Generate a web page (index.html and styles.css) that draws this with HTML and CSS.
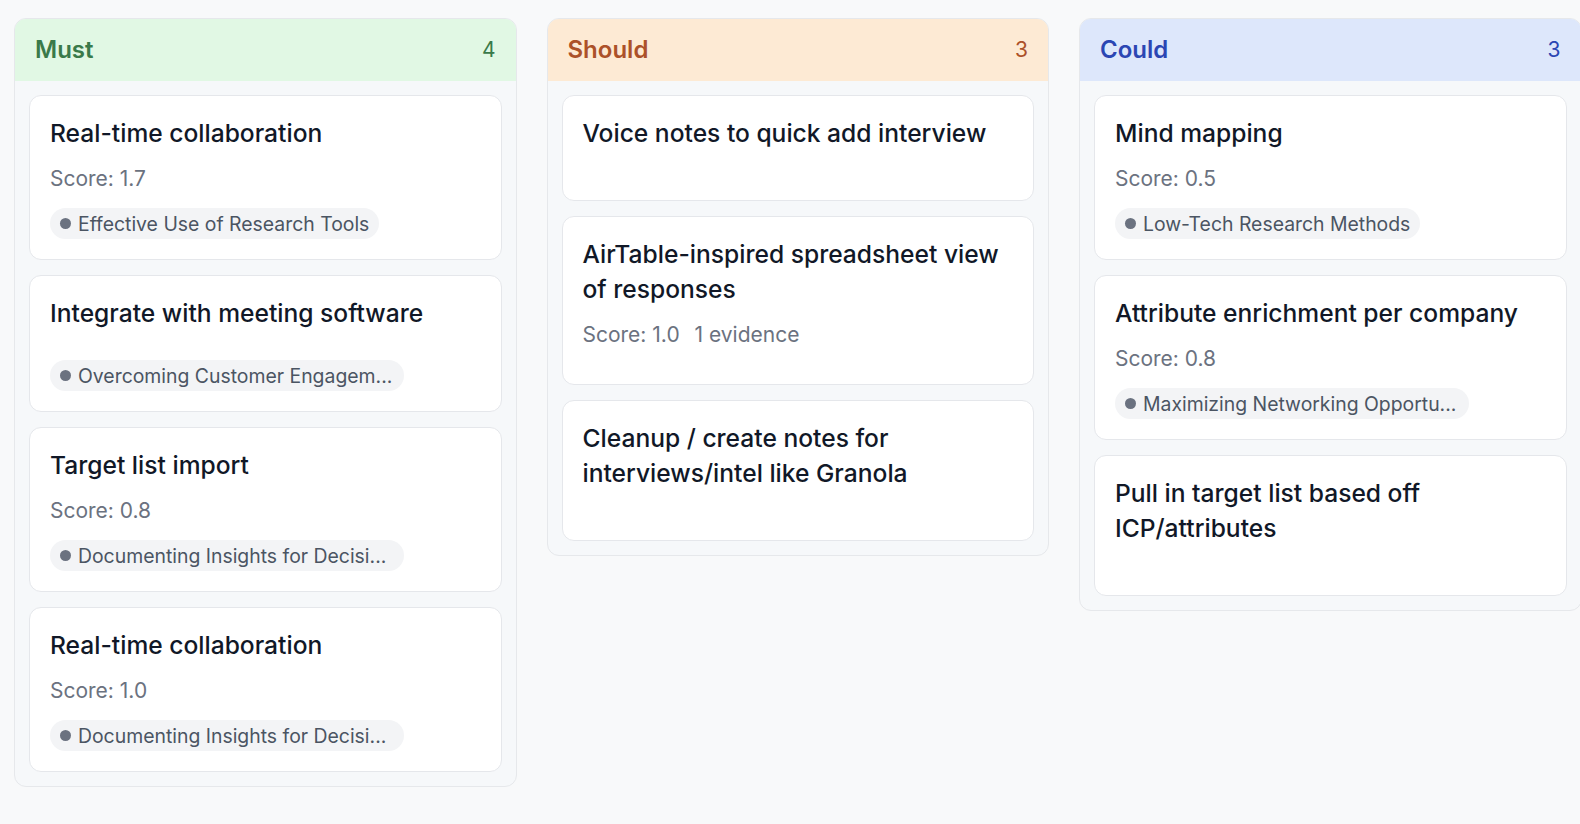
FILE: index.html
```html
<!DOCTYPE html>
<html lang="en">
<head>
    <meta charset="UTF-8" />
    <title>MoSCoW Board</title>
    <link rel="stylesheet" href="styles.css">
</head>
<body>

    <div class="board">

        <!-- Must -->
        <section class="column must">
            <header class="column-head">
                <h2>Must</h2>
                <span class="count">4</span>
            </header>
            <div class="column-body">
                <article class="card">
                    <h3>Real-time collaboration</h3>
                    <div class="score">Score: 1.7</div>
                    <span class="tag"><i class="dot"></i>Effective Use of Research Tools</span>
                </article>
                <article class="card">
                    <h3>Integrate with meeting software</h3>
                    <div class="spacer"></div>
                    <span class="tag clipped"><i class="dot"></i>Overcoming Customer Engagem...</span>
                </article>
                <article class="card">
                    <h3>Target list import</h3>
                    <div class="score">Score: 0.8</div>
                    <span class="tag clipped"><i class="dot"></i>Documenting Insights for Decisi...</span>
                </article>
                <article class="card">
                    <h3>Real-time collaboration</h3>
                    <div class="score">Score: 1.0</div>
                    <span class="tag clipped"><i class="dot"></i>Documenting Insights for Decisi...</span>
                </article>
            </div>
        </section>

        <!-- Should -->
        <section class="column should">
            <header class="column-head">
                <h2>Should</h2>
                <span class="count">3</span>
            </header>
            <div class="column-body">
                <article class="card">
                    <h3>Voice notes to quick add interview</h3>
                    <div class="spacer"></div>
                </article>
                <article class="card">
                    <h3>AirTable-inspired spreadsheet view of responses</h3>
                    <div class="score">Score: 1.0 <span class="evidence">1 evidence</span></div>
                </article>
                <article class="card">
                    <h3>Cleanup / create notes for interviews/intel like Granola</h3>
                    <div class="spacer"></div>
                </article>
            </div>
        </section>

        <!-- Could -->
        <section class="column could">
            <header class="column-head">
                <h2>Could</h2>
                <span class="count">3</span>
            </header>
            <div class="column-body">
                <article class="card">
                    <h3>Mind mapping</h3>
                    <div class="score">Score: 0.5</div>
                    <span class="tag"><i class="dot"></i>Low-Tech Research Methods</span>
                </article>
                <article class="card">
                    <h3>Attribute enrichment per company</h3>
                    <div class="score">Score: 0.8</div>
                    <span class="tag clipped"><i class="dot"></i>Maximizing Networking Opportu...</span>
                </article>
                <article class="card">
                    <h3>Pull in target list based off ICP/attributes</h3>
                    <div class="spacer"></div>
                </article>
            </div>
        </section>

    </div>

</body>
</html>
```

FILE: styles.css
```css
/* Reset básico */
* {
    box-sizing: border-box;
}

body {
    font-family: Inter, 'Noto Sans', sans-serif;
    background: #f8f9fa;
    margin: 0;
    padding: 18px 0 0 14px;
    color: #111827;
    overflow: hidden;
}

.board {
    display: flex;
    align-items: flex-start;
    gap: 30px;
}

/* Colunas */
.column {
    flex: 0 0 502.5px;
    background: #f6f8fa;
    border: 1px solid #e6e8eb;
    border-radius: 12px;
    overflow: hidden;
}

.column-head {
    height: 62px;
    padding: 0 20px 2px;
    display: flex;
    align-items: center;
    justify-content: space-between;
}

.column-head h2 {
    margin: 0;
    font-size: 24px;
    font-weight: 600;
}

.count {
    font-size: 21px;
}

.must .column-head {
    background: #e1f8e4;
    color: #3a7a4a;
}

.should .column-head {
    background: #fdead4;
    color: #ac5129;
}

.could .column-head {
    background: #dde7fb;
    color: #2b46b3;
}

.column-body {
    padding: 14px;
    display: flex;
    flex-direction: column;
    gap: 15px;
}

/* Cartões */
.card {
    background: #fff;
    border: 1px solid #e5e7eb;
    border-radius: 12px;
    padding: 20px;
}

.card h3 {
    margin: 0;
    font-size: 24.6px;
    line-height: 35px;
    font-weight: 450;
    color: #111827;
}

.score {
    margin: 12px 0 14px;
    font-size: 21px;
    line-height: 31px;
    color: #6b7280;
}

.evidence {
    margin-left: 9px;
}

.spacer {
    height: 29px;
}

.tag {
    display: inline-flex;
    align-items: center;
    gap: 7px;
    height: 31px;
    padding: 0 10px;
    border-radius: 16px;
    background: #f3f4f6;
    color: #4b5563;
    font-size: 19.4px;
    white-space: nowrap;
}

.tag.clipped {
    width: 354px;
}

.dot {
    width: 11px;
    height: 11px;
    border-radius: 50%;
    background: #6b7280;
}
```
